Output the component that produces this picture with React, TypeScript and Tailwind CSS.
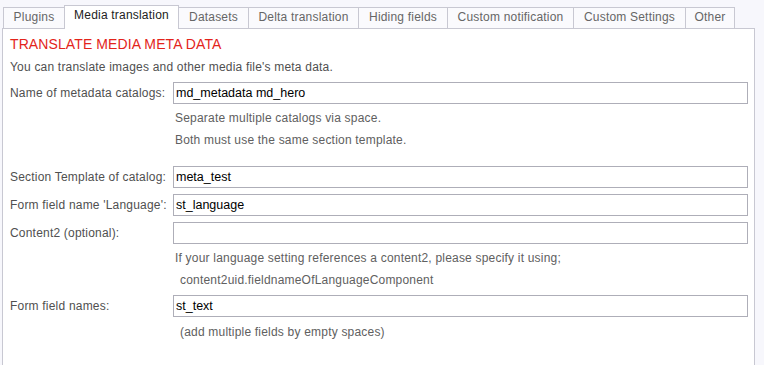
import React from 'react';

const TABS = [
  { label: 'Plugins', w: 'w-[62px]' },
  { label: 'Media translation', w: 'w-[115px]', active: true },
  { label: 'Datasets', w: 'w-[71px]' },
  { label: 'Delta translation', w: 'w-[111px]' },
  { label: 'Hiding fields', w: 'w-[90px]' },
  { label: 'Custom notification', w: 'w-[127px]' },
  { label: 'Custom Settings', w: 'w-[113px]' },
  { label: 'Other', w: 'w-[50px]' },
];

function Field({ label, value }: { label: string; value?: string }) {
  return (
    <div className="flex items-center">
      <label className="w-[163px] text-[12px] tracking-[0.2px] text-[#505050]">{label}</label>
      <input
        readOnly
        value={value || ''}
        className="w-[575px] h-[22px] border border-[#aeaeb8] bg-white px-[2px] text-[12.5px] text-black outline-none"
      />
    </div>
  );
}

function Help({ children, indent }: { children: React.ReactNode; indent?: boolean }) {
  return (
    <p className={`${indent ? 'pl-[170px]' : 'pl-[165px]'} text-[12px] leading-[22px] tracking-[0.2px] text-[#606060]`}>{children}</p>
  );
}

export default function App() {
  return (
    <div className="w-[764px] h-[365px] overflow-hidden bg-[#f7f7fc] pl-[2px] pt-[5px] font-['Liberation_Sans',Arial,sans-serif]">
      {/* Tabs */}
      <div className="flex items-end ml-px h-[23px]">
        {TABS.map((t, i) => (
          <div
            key={t.label}
            className={`${t.w} ${i > 0 ? '-ml-px' : ''} flex justify-center border border-b-0 border-[#c8c8d2] pt-[2px] text-[12px] leading-[14px] tracking-[0.2px] ${
              t.active
                ? 'relative z-10 h-[24px] -mb-px bg-white text-[#222]'
                : 'h-[21px] bg-[#fafafd] text-[#666]'
            }`}
          >
            {t.label}
          </div>
        ))}
      </div>

      {/* Panel */}
      <div className="w-[753px] h-[340px] border border-[#c8c8d2] bg-white pl-[7px] pt-[7px]">
        <h2 className="text-[14px] leading-[16px] tracking-[0.1px] text-[#e3241b]">TRANSLATE MEDIA META DATA</h2>
        <p className="mt-[8px] text-[12px] leading-[14px] tracking-[0.2px] text-[#505050]">
          You can translate images and other media file's meta data.
        </p>

        <div className="mt-[8px]">
          <Field label="Name of metadata catalogs:" value="md_metadata md_hero" />
        </div>
        <div className="mt-[3px]">
          <Help>Separate multiple catalogs via space.</Help>
          <Help>Both must use the same section template.</Help>
        </div>

        <div className="mt-[15px] flex flex-col gap-[6px]">
          <Field label="Section Template of catalog:" value="meta_test" />
          <Field label="Form field name 'Language':" value="st_language" />
          <Field label="Content2 (optional):" />
        </div>
        <div className="mt-[3px]">
          <Help>If your language setting references a content2, please specify it using;</Help>
          <Help indent>content2uid.fieldnameOfLanguageComponent</Help>
        </div>

        <div className="mt-[4px]">
          <Field label="Form field names:" value="st_text" />
        </div>
        <div className="mt-[4px]">
          <Help indent>(add multiple fields by empty spaces)</Help>
        </div>
      </div>
    </div>
  );
}
